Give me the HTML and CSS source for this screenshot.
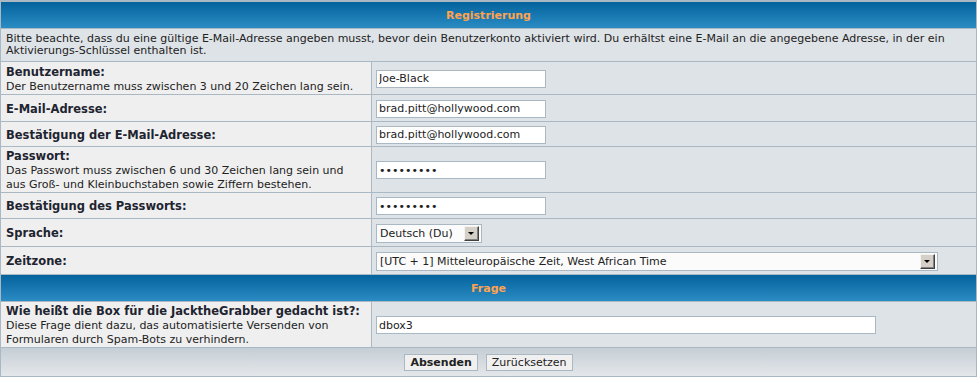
FILE: index.html
```html
<!DOCTYPE html>
<html lang="de">
<head>
  <meta charset="UTF-8" />
  <title>Registrierung</title>
  <link rel="stylesheet" href="styles.css">
</head>
<body>

  <form class="regform" action="#" method="post">
    <table class="forumline">
      <tr>
        <th class="thHead" colspan="2">Registrierung</th>
      </tr>
      <tr class="r-intro">
        <td class="row2 intro" colspan="2">Bitte beachte, dass du eine gültige E-Mail-Adresse angeben musst, bevor dein Benutzerkonto aktiviert wird. Du erhältst eine E-Mail an die angegebene Adresse, in der ein Aktivierungs-Schlüssel enthalten ist.</td>
      </tr>
      <tr class="r-user">
        <td class="row1 label"><span class="gen">Benutzername:</span><br><span class="gensmall">Der Benutzername muss zwischen 3 und 20 Zeichen lang sein.</span></td>
        <td class="row2 field"><input class="post short" type="text" value="Joe-Black"></td>
      </tr>
      <tr class="r-mail">
        <td class="row1 label"><span class="gen">E-Mail-Adresse:</span></td>
        <td class="row2 field"><input class="post short" type="text" value="brad.pitt@hollywood.com"></td>
      </tr>
      <tr class="r-mail2">
        <td class="row1 label"><span class="gen">Bestätigung der E-Mail-Adresse:</span></td>
        <td class="row2 field"><input class="post short" type="text" value="brad.pitt@hollywood.com"></td>
      </tr>
      <tr class="r-pass">
        <td class="row1 label"><span class="gen">Passwort:</span><br><span class="gensmall">Das Passwort muss zwischen 6 und 30 Zeichen lang sein und aus Groß- und Kleinbuchstaben sowie Ziffern bestehen.</span></td>
        <td class="row2 field"><input class="post short" type="password" value="geheim123"></td>
      </tr>
      <tr class="r-pass2">
        <td class="row1 label"><span class="gen">Bestätigung des Passworts:</span></td>
        <td class="row2 field"><input class="post short" type="password" value="geheim123"></td>
      </tr>
      <tr class="r-lang">
        <td class="row1 label"><span class="gen">Sprache:</span></td>
        <td class="row2 field">
          <span class="dropdown lang">
            <select><option>Deutsch (Du)</option></select>
            <span class="drop-btn"></span>
          </span>
        </td>
      </tr>
      <tr class="r-tz">
        <td class="row1 label"><span class="gen">Zeitzone:</span></td>
        <td class="row2 field">
          <span class="dropdown tz">
            <select><option>[UTC + 1] Mitteleuropäische Zeit, West African Time</option></select>
            <span class="drop-btn"></span>
          </span>
        </td>
      </tr>
      <tr>
        <th class="thHead" colspan="2">Frage</th>
      </tr>
      <tr class="r-question">
        <td class="row1 label"><span class="gen">Wie heißt die Box für die JacktheGrabber gedacht ist?:</span><br><span class="gensmall">Diese Frage dient dazu, das automatisierte Versenden von Formularen durch Spam-Bots zu verhindern.</span></td>
        <td class="row2 field"><input class="post long" type="text" value="dbox3"></td>
      </tr>
      <tr class="r-buttons">
        <td class="catBottom" colspan="2">
          <button class="mainoption" type="submit">Absenden</button>
          <button class="liteoption" type="reset">Zurücksetzen</button>
        </td>
      </tr>
    </table>
  </form>

</body>
</html>
```

FILE: styles.css
```css
body { margin: 0; padding: 0; background: #fff; font-family: "DejaVu Sans", Verdana, sans-serif; color: #222; overflow: hidden; }
.regform { margin: 0; }
.forumline { width: 977px; border-collapse: separate; border-spacing: 1px; border-top: 1px solid #a9b8c2; background: #a9b8c2; }
.forumline td, .forumline th { padding: 0 4px; }

/* headers */
.thHead { height: 26px; padding: 0; background: linear-gradient(#04639d, #2b8bc3); color: #ffa34f; font-size: 11px; font-weight: bold; text-align: center; vertical-align: middle; }

/* rows */
.row1 { background: #efefef; }
.row2 { background: #dee3e7; }
.forumline .label { width: 357px; padding: 1px 8px 0 5px; vertical-align: middle; line-height: 12px; }
.forumline .field { vertical-align: middle; padding: 1px 0 0 4px; }
.forumline .intro { height: 32px; padding: 0 5px; font-size: 11px; line-height: 12px; vertical-align: middle; }

.gen { font-size: 11.5px; font-weight: bold; color: #1e2430; line-height: 14px; }
.gensmall { font-size: 11px; line-height: 12px; color: #222; }

.r-user td { height: 31px; }
.r-mail td { height: 25px; }
.r-mail2 td { height: 23px; }
.r-pass td { height: 44px; }
.r-pass2 td { height: 24px; }
.r-lang td { height: 26px; }
.r-tz td { height: 26px; }
.r-question td { height: 44px; }

/* inputs */
.post { display: block; box-sizing: border-box; height: 18px; padding: 0 2px; margin: 0; border: 1px solid #a9b8c2; background: #fff; font-family: "DejaVu Sans", Verdana, sans-serif; font-size: 11px; color: #222; outline: none; }
.short { width: 170px; }
.long { width: 500px; }

/* select boxes */
.dropdown { display: flex; align-items: center; box-sizing: border-box; height: 19px; padding: 1px 2px 1px 0; border: 1px solid #a9b8c2; background: #fbfbfb; }
.dropdown.lang { width: 106px; }
.dropdown.tz { width: 562px; }
.dropdown select { flex: 1; min-width: 0; height: 15px; padding: 0 0 0 3px; margin: 0; border: none; background: transparent; appearance: none; -webkit-appearance: none; font-family: "DejaVu Sans", Verdana, sans-serif; font-size: 11px; color: #222; outline: none; }
.drop-btn { position: relative; box-sizing: border-box; width: 15px; height: 15px; background: #d4d0c8; border: 1px solid; border-color: #f4f3ef #404040 #404040 #f4f3ef; box-shadow: inset -1px -1px 0 #808080; }
.drop-btn::after { content: ""; position: absolute; left: 3px; top: 5px; border-left: 3px solid transparent; border-right: 3px solid transparent; border-top: 3px solid #000; }

/* bottom bar */
.forumline .catBottom { height: 28px; padding: 0; background: linear-gradient(#c5ced5, #e4e7ea); text-align: center; vertical-align: middle; font-size: 0; }
.mainoption, .liteoption { height: 17px; padding: 0 5px; margin: 0 4px; border: 1px solid #a9b8c2; background: #f0f0f0; font-family: "DejaVu Sans", Verdana, sans-serif; font-size: 11px; color: #222; cursor: pointer; vertical-align: middle; }
.mainoption { font-weight: bold; }
```
